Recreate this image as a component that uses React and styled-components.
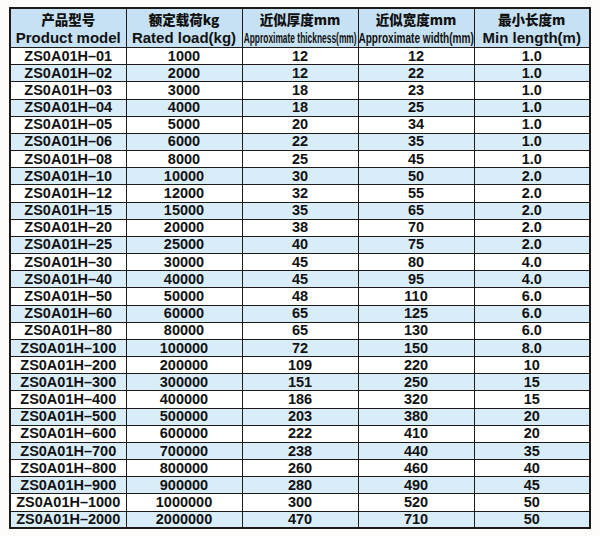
import React from "react";
import styled, { createGlobalStyle } from "styled-components";

const rows = [
  ["ZS0A01H–01", "1000", "12", "12", "1.0"],
  ["ZS0A01H–02", "2000", "12", "22", "1.0"],
  ["ZS0A01H–03", "3000", "18", "23", "1.0"],
  ["ZS0A01H–04", "4000", "18", "25", "1.0"],
  ["ZS0A01H–05", "5000", "20", "34", "1.0"],
  ["ZS0A01H–06", "6000", "22", "35", "1.0"],
  ["ZS0A01H–08", "8000", "25", "45", "1.0"],
  ["ZS0A01H–10", "10000", "30", "50", "2.0"],
  ["ZS0A01H–12", "12000", "32", "55", "2.0"],
  ["ZS0A01H–15", "15000", "35", "65", "2.0"],
  ["ZS0A01H–20", "20000", "38", "70", "2.0"],
  ["ZS0A01H–25", "25000", "40", "75", "2.0"],
  ["ZS0A01H–30", "30000", "45", "80", "4.0"],
  ["ZS0A01H–40", "40000", "45", "95", "4.0"],
  ["ZS0A01H–50", "50000", "48", "110", "6.0"],
  ["ZS0A01H–60", "60000", "65", "125", "6.0"],
  ["ZS0A01H–80", "80000", "65", "130", "6.0"],
  ["ZS0A01H–100", "100000", "72", "150", "8.0"],
  ["ZS0A01H–200", "200000", "109", "220", "10"],
  ["ZS0A01H–300", "300000", "151", "250", "15"],
  ["ZS0A01H–400", "400000", "186", "320", "15"],
  ["ZS0A01H–500", "500000", "203", "380", "20"],
  ["ZS0A01H–600", "600000", "222", "410", "20"],
  ["ZS0A01H–700", "700000", "238", "440", "35"],
  ["ZS0A01H–800", "800000", "260", "460", "40"],
  ["ZS0A01H–900", "900000", "280", "490", "45"],
  ["ZS0A01H–1000", "1000000", "300", "520", "50"],
  ["ZS0A01H–2000", "2000000", "470", "710", "50"],
];

const headers = [
  { zh: "产品型号", en: "Product model" },
  { zh: "额定载荷kg", en: "Rated load(kg)" },
  { zh: "近似厚度mm", en: "Approximate thickness(mm)", narrow: 0.6 },
  { zh: "近似宽度mm", en: "Approximate width(mm)", narrow: 0.72 },
  { zh: "最小长度m", en: "Min length(m)" },
];

const GlobalStyle = createGlobalStyle`
  body {
    margin: 0;
    background: #fdfcfa;
    font-family: "Liberation Sans", Arial, "Noto Sans CJK SC", sans-serif;
  }
`;

const Page = styled.div`
  width: 600px;
  height: 536px;
  padding: 7px 0 0 9px;
  box-sizing: border-box;
`;

const Table = styled.table`
  width: 582px;
  table-layout: fixed;
  border-collapse: collapse;
  border: 2.5px solid #1e1a18;
  color: #111;
  font-weight: bold;
`;

const HeadCell = styled.th`
  height: 38px;
  padding: 0;
  background: #c6e1f3;
  border: 1.5px solid #1e1a18;
  text-align: center;
  vertical-align: middle;
  overflow: hidden;
`;

const HeadStack = styled.div`
  display: flex;
  flex-direction: column;
  align-items: stretch;
  gap: 2px;
`;

const Zh = styled.div`
  font-size: 13.5px;
  font-family: "Noto Sans CJK SC", sans-serif;
  font-weight: 900;
  line-height: 17px;
  height: 17px;
`;

const En = styled.div`
  display: flex;
  justify-content: center;
  white-space: nowrap;
  font-size: 15px;
  line-height: 16px;
  height: 16px;
`;

const Narrow = styled.span`
  display: inline-block;
  font-size: 14px;
  transform: scaleX(${(p) => p.$scale});
  transform-origin: center;
`;

const Row = styled.tr`
  height: 17.18px;
  background: ${(p) => (p.$shade ? "#d9edf9" : "#ffffff")};
`;

const Cell = styled.td`
  padding: 0;
  border: 1.5px solid #1e1a18;
  text-align: center;
  font-size: 14.5px;
  line-height: 15px;
  white-space: nowrap;
`;

export default function App() {
  return (
    <>
      <GlobalStyle />
      <Page>
        <Table>
          <thead>
            <tr>
              {headers.map((h) => (
                <HeadCell key={h.zh}>
                  <HeadStack>
                    <Zh>{h.zh}</Zh>
                    <En>
                      {h.narrow ? <Narrow $scale={h.narrow}>{h.en}</Narrow> : h.en}
                    </En>
                  </HeadStack>
                </HeadCell>
              ))}
            </tr>
          </thead>
          <tbody>
            {rows.map((r, i) => (
              <Row key={r[0]} $shade={i % 2 === 1}>
                {r.map((v, j) => (
                  <Cell key={j}>{v}</Cell>
                ))}
              </Row>
            ))}
          </tbody>
        </Table>
      </Page>
    </>
  );
}
